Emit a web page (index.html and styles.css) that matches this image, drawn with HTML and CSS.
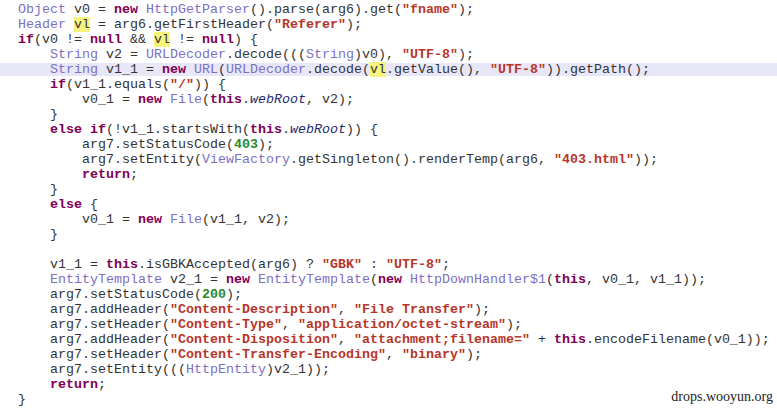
FILE: index.html
```html
<!DOCTYPE html>
<html>
<head>
<meta charset="utf-8">
<link rel="stylesheet" href="styles.css">
</head>
<body>
<div class="code">
<div class="ln"><span class="t">Object</span> v0 = <span class="k">new</span> <span class="t">HttpGetParser</span>().parse(arg6).get(<span class="s">"fname"</span>);</div>
<div class="ln"><span class="t">Header</span> <span class="h">vl</span> = arg6.getFirstHeader(<span class="s">"Referer"</span>);</div>
<div class="ln"><span class="k">if</span>(v0 != <span class="k">null</span> &amp;&amp; <span class="h">vl</span> != <span class="k">null</span>) {</div>
<div class="ln">    <span class="t">String</span> v2 = <span class="t">URLDecoder</span>.decode(((<span class="t">String</span>)v0), <span class="s">"UTF-8"</span>);</div>
<div class="ln cur">    <span class="t">String</span> v1_1 = <span class="k">new</span> <span class="t">URL</span>(<span class="t">URLDecoder</span>.decode(<span class="h">vl</span>.getValue(), <span class="s">"UTF-8"</span>)).getPath();</div>
<div class="ln">    <span class="k">if</span>(v1_1.equals(<span class="s">"/"</span>)) {</div>
<div class="ln">        v0_1 = <span class="k">new</span> <span class="t">File</span>(<span class="k">this</span>.<span class="f">webRoot</span>, v2);</div>
<div class="ln">    }</div>
<div class="ln">    <span class="k">else</span> <span class="k">if</span>(!v1_1.startsWith(<span class="k">this</span>.<span class="f">webRoot</span>)) {</div>
<div class="ln">        arg7.setStatusCode(<span class="n">403</span>);</div>
<div class="ln">        arg7.setEntity(<span class="t">ViewFactory</span>.getSingleton().renderTemp(arg6, <span class="s">"403.html"</span>));</div>
<div class="ln">        <span class="k">return</span>;</div>
<div class="ln">    }</div>
<div class="ln">    <span class="k">else</span> {</div>
<div class="ln">        v0_1 = <span class="k">new</span> <span class="t">File</span>(v1_1, v2);</div>
<div class="ln">    }</div>
<div class="ln"> </div>
<div class="ln">    v1_1 = <span class="k">this</span>.isGBKAccepted(arg6) ? <span class="s">"GBK"</span> : <span class="s">"UTF-8"</span>;</div>
<div class="ln">    <span class="t">EntityTemplate</span> v2_1 = <span class="k">new</span> <span class="t">EntityTemplate</span>(<span class="k">new</span> <span class="t">HttpDownHandler$1</span>(<span class="k">this</span>, v0_1, v1_1));</div>
<div class="ln">    arg7.setStatusCode(<span class="n">200</span>);</div>
<div class="ln">    arg7.addHeader(<span class="s">"Content-Description"</span>, <span class="s">"File Transfer"</span>);</div>
<div class="ln">    arg7.setHeader(<span class="s">"Content-Type"</span>, <span class="s">"application/octet-stream"</span>);</div>
<div class="ln">    arg7.addHeader(<span class="s">"Content-Disposition"</span>, <span class="s">"attachment;filename="</span> + <span class="k">this</span>.encodeFilename(v0_1));</div>
<div class="ln">    arg7.setHeader(<span class="s">"Content-Transfer-Encoding"</span>, <span class="s">"binary"</span>);</div>
<div class="ln">    arg7.setEntity(((<span class="t">HttpEntity</span>)v2_1));</div>
<div class="ln">    <span class="k">return</span>;</div>
<div class="ln">}</div>
</div>
<div class="mark">drops.wooyun.org</div>
</body>
</html>
```

FILE: styles.css
```css
html, body {
  margin: 0;
  padding: 0;
  background: #ffffff;
}
body {
  width: 777px;
  height: 408px;
  overflow: hidden;
  position: relative;
}
.code {
  padding-top: 2px;
  font-family: "Liberation Mono", "Courier New", monospace;
  font-size: 13.33px;
  color: #333333;
}
.ln {
  height: 15px;
  line-height: 15px;
  white-space: pre;
  padding-left: 18px;
}
.cur {
  background: linear-gradient(to bottom, transparent 0px, transparent 1px, #e7e7f8 1px, #e7e7f8 14px, transparent 14px);
}
.k {
  color: #7f0055;
  font-weight: bold;
}
.s {
  color: #b8352a;
  font-weight: bold;
}
.t {
  color: #7c70c4;
}
.n {
  color: #2d8a2d;
  font-weight: bold;
}
.f {
  color: #1e2a6e;
  font-style: italic;
}
.h {
  background: #f6f47c;
}
.mark {
  position: absolute;
  right: 4px;
  bottom: 3px;
  font-family: "Liberation Serif", "Times New Roman", serif;
  font-size: 14px;
  color: #222;
}
```
